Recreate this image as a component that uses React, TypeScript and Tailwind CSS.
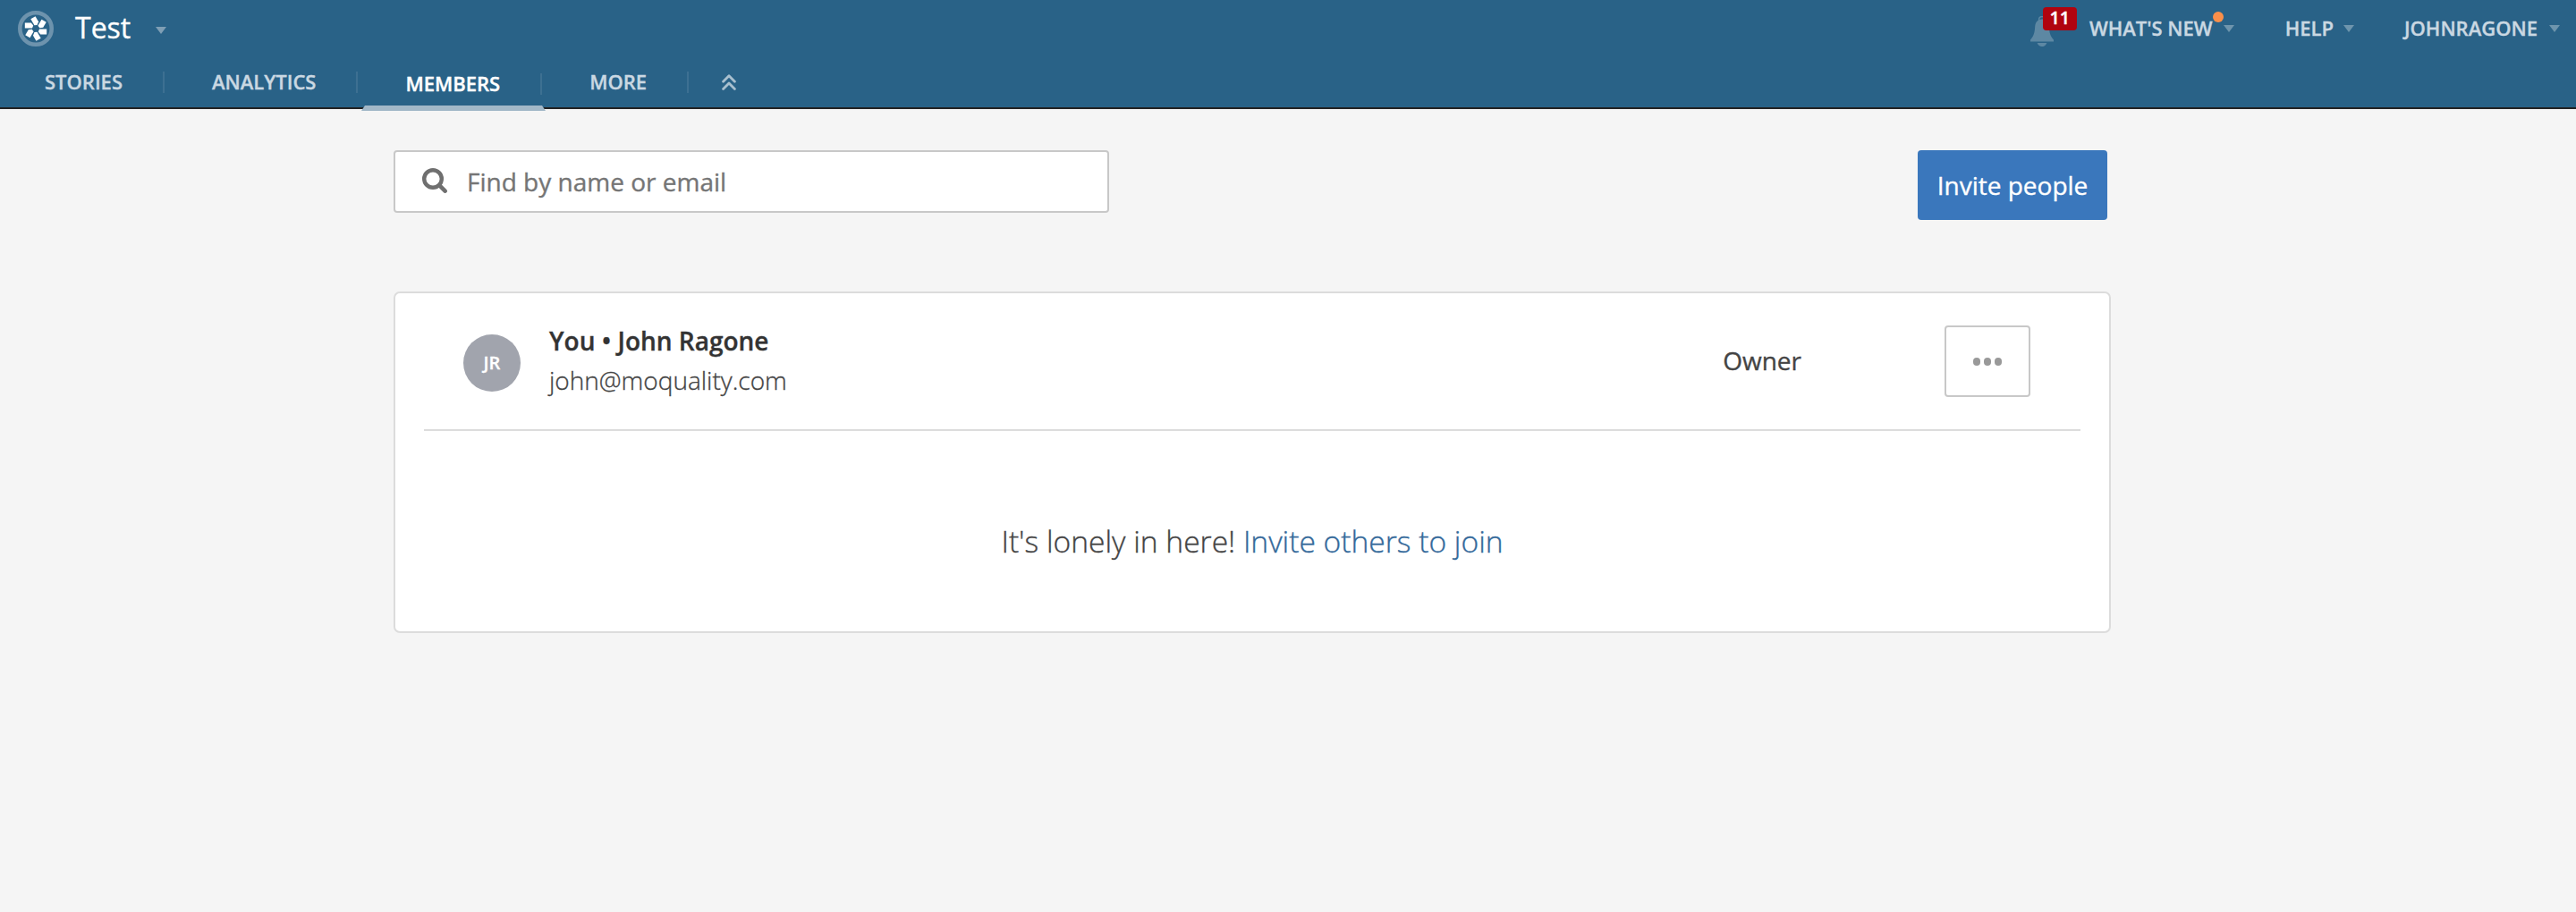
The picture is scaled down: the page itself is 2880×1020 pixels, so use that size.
import type { ReactNode } from "react";

function Logo() {
  return (
    <svg width="40" height="40" viewBox="-20 -20 40 40" className="shrink-0">
      <circle r="17.7" fill="none" stroke="#6d93ad" strokeWidth="4.6" />
      {[0, 60, 120, 180, 240, 300].map((a) => (
        <path key={a} d="M4 .5 H12.2 V6.5 H5.2 L2.8 3.4 Z" fill="#fff" transform={`rotate(${a})`} />
      ))}
    </svg>
  );
}

function Caret({ className = "text-[#6e95ad]" }: { className?: string }) {
  return (
    <svg width="12" height="8" viewBox="0 0 12 8" className={`shrink-0 ${className}`}>
      <path d="M0 0H12L6 8Z" fill="currentColor" />
    </svg>
  );
}

function Bell() {
  return (
    <svg width="26" height="34" viewBox="0 0 26 34" fill="#5d88a3" className="block">
      <path d="M9.6 5V4a3.4 3.4 0 0 1 6.8 0V5" fill="none" stroke="#5d88a3" strokeWidth="1.4" />
      <path d="M13 3.4C17.6 3.4 20.4 6.4 20.8 11.5C21.2 19 22.4 22.4 26 26.4V28.6H0V26.4C3.6 22.4 4.8 19 5.2 11.5C5.6 6.4 8.4 3.4 13 3.4Z" />
      <path d="M7.6 30H18.4C17.4 32.6 15.4 34 13 34S8.6 32.6 7.6 30Z" />
    </svg>
  );
}

function NavItem({ children, active = false, first = false }: { children: ReactNode; active?: boolean; first?: boolean }) {
  return (
    <div className={`relative flex h-14 items-center ${active ? "pt-1" : ""} ${first ? "pl-[50px]" : "pl-[53px]"}`}>
      <span className={`-mt-[2px] mr-[45px] text-[22px] leading-6 font-semibold ${active ? "text-white" : "text-[#cad8e2]"}`}>
        {children}
      </span>
      <span className="h-6 w-[2px] bg-[#3d7092]" />
      {active && (
        <svg width="206" height="6" viewBox="0 0 206 6" className="absolute top-[54px] left-1">
          <path d="M4 0H202L206 6H0Z" fill="#a2b8c8" />
        </svg>
      )}
    </div>
  );
}

function Header() {
  return (
    <header className="h-[122px] border-b-2 border-[#222] bg-[#296287]">
      <div className="flex h-16 items-center pr-[18px] pl-5">
        <Logo />
        <span className="-mt-[2px] ml-6 text-[32px] leading-9 text-white">Test</span>
        <Caret className="mt-1 ml-7 text-[#7f9fb5]" />
        <div className="ml-auto flex items-center text-[22px] leading-6 font-semibold text-[#cad8e2]">
          <div className="relative mt-[6px] mr-10">
            <Bell />
            <span className="absolute -top-[10px] left-[14px] flex h-[26px] w-[38px] justify-center rounded bg-[#b0040f] text-[20px] leading-6 font-semibold text-white">
              11
            </span>
          </div>
          <div className="relative mr-[57px] flex items-center gap-3">
            <span className="-mt-[2px]">WHAT'S NEW</span>
            <Caret />
            <span className="absolute -top-2 left-[138px] size-3 rounded-full bg-[#f98f4a]" />
          </div>
          <div className="mr-14 flex items-center gap-[11px]">
            <span className="-mt-[2px]">HELP</span>
            <Caret />
          </div>
          <div className="flex items-center gap-[13px]">
            <span className="-mt-[2px]">JOHNRAGONE</span>
            <Caret />
          </div>
        </div>
      </div>
      <nav className="flex h-14 items-center">
        <NavItem first>STORIES</NavItem>
        <NavItem>ANALYTICS</NavItem>
        <NavItem active>MEMBERS</NavItem>
        <NavItem>MORE</NavItem>
        <svg
          width="16"
          height="18"
          viewBox="0 0 16 18"
          fill="none"
          stroke="#a9c0cf"
          strokeWidth="2.8"
          strokeLinecap="round"
          strokeLinejoin="round"
          className="ml-[37px]"
        >
          <path d="M1.6 8.2L8 1.8L14.4 8.2M1.6 16.4L8 10L14.4 16.4" />
        </svg>
      </nav>
    </header>
  );
}

function SearchRow() {
  return (
    <div className="flex items-start justify-between pr-1">
      <div className="flex h-[70px] w-[800px] items-center rounded border-2 border-[#c8c8c8] bg-white pl-[30px]">
        <svg width="28" height="28" viewBox="0 0 28 28" fill="none" stroke="#6f6f6f" className="-mt-[2px]">
          <circle cx="12" cy="12" r="9.8" strokeWidth="4.4" />
          <path d="M19.6 19.6L25.6 25.6" strokeWidth="4.6" strokeLinecap="round" />
        </svg>
        <span className="ml-[22px] text-[28px] leading-8 text-[#757575]">Find by name or email</span>
      </div>
      <button className="h-[78px] w-[212px] rounded bg-[#3a77bc] text-[28px] leading-8 text-white">
        Invite people
      </button>
    </div>
  );
}

function MemberCard() {
  return (
    <section className="mt-20 h-[382px] rounded-[7px] border-2 border-[#dcdcdc] bg-white">
      <div className="mx-8 flex h-[154px] items-center border-b-2 border-[#dcdcdc] pr-14 pl-11 text-[28px] text-[#444]">
        <div className="mt-1 flex size-16 items-center justify-center rounded-full bg-[#a1a4ad] text-[20px] leading-6 font-semibold text-white">
          JR
        </div>
        <div className="-mt-[2px] ml-8 leading-[44px]">
          <div className="font-semibold text-[#333]">You • John Ragone</div>
          <div className="font-light">john@moquality.com</div>
        </div>
        <div className="-mt-[2px] mr-40 ml-auto leading-8">Owner</div>
        <button className="flex h-20 w-24 items-center justify-center gap-1 rounded border-2 border-[#c8c8c8]">
          <span className="h-[9px] w-2 rounded-full bg-[#999]" />
          <span className="h-[9px] w-2 rounded-full bg-[#999]" />
          <span className="h-[9px] w-2 rounded-full bg-[#999]" />
        </button>
      </div>
      <p className="mt-[99px] text-center text-[33.6px] leading-[48px] font-light text-[#444]">
        It's lonely in here! <a className="text-[#34699a]">Invite others to join</a>
      </p>
    </section>
  );
}

export default function App() {
  return (
    <div className="min-h-[1020px] w-[2880px] bg-[#f5f5f5] font-['Open_Sans',sans-serif] [-webkit-text-stroke:0.35px]">
      <Header />
      <main className="ml-[440px] w-[1920px] pt-[46px]">
        <SearchRow />
        <MemberCard />
      </main>
    </div>
  );
}
